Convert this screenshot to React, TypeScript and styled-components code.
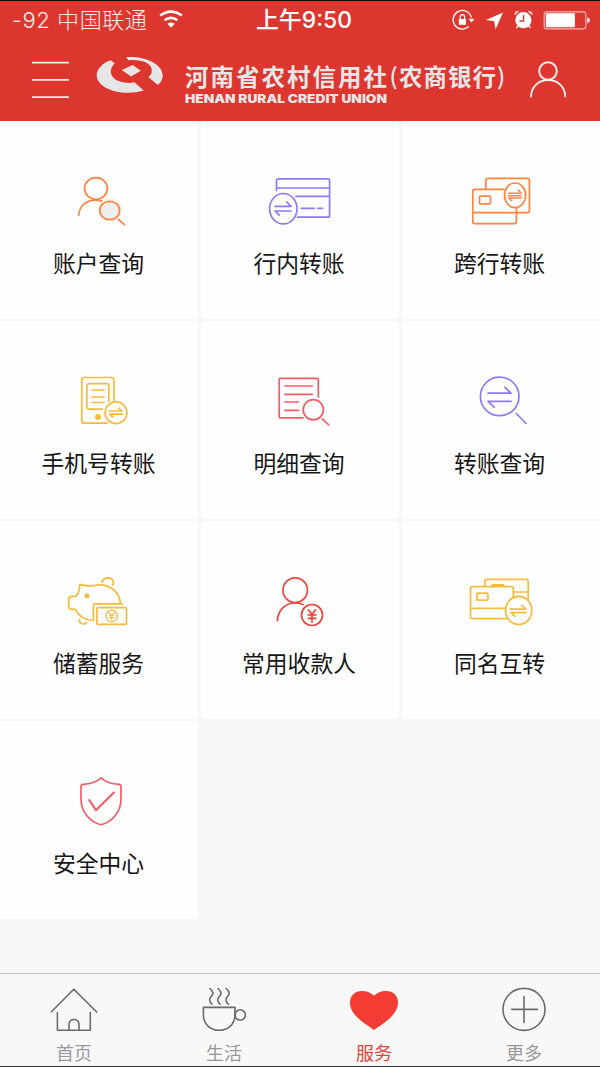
import React from "react";
import styled, { createGlobalStyle } from "styled-components";

const GlobalStyle = createGlobalStyle`
  * { box-sizing: border-box; }
  body {
    margin: 0;
    background: #f7f7f7;
    font-family: Inter, "Noto Sans CJK SC", sans-serif;
  }
`;

const Screen = styled.div`
  width: 600px;
  height: 1067px;
  display: flex;
  flex-direction: column;
  overflow: hidden;
  background: #f7f7f7;
  border-top: 1px solid #1c0504;
  border-bottom: 1px solid #333;
`;

const Header = styled.header`
  height: 120px;
  flex: none;
  background: #dc362f;
  color: #fff;
`;

const StatusBar = styled.div`
  height: 38px;
  display: flex;
  align-items: center;
`;

const Carrier = styled.div`
  width: 240px;
  padding-left: 12px;
  display: flex;
  align-items: center;
  font-size: 22px;
  line-height: 38px;
  font-weight: 300;
  color: #fdeeee;
  white-space: nowrap;
`;

const CarrierName = styled.span`
  width: 147px;
  letter-spacing: 0.55px;
`;

const Clock = styled.div`
  width: 128px;
  text-align: center;
  font-size: 22.9px;
  line-height: 38px;
  font-weight: 500;
  white-space: nowrap;
`;

const StatusIcons = styled.div`
  flex: 1;
  display: flex;
  justify-content: flex-end;
  align-items: center;
  padding-right: 9px;
  gap: 9px;
`;

const NavBar = styled.div`
  height: 82px;
  display: flex;
  align-items: flex-start;
  padding: 21px 0 0 30px;
`;

const NavButton = styled.button<{ $push?: number }>`
  border: 0;
  padding: 0;
  background: none;
  display: flex;
  margin-left: ${(p) => p.$push ?? 0}px;
`;

const Brand = styled.div`
  display: flex;
  margin: -5px 0 0 24px;
`;

const Grid = styled.main`
  display: grid;
  grid-template-columns: repeat(3, 198px);
  grid-auto-rows: 198px;
  column-gap: 3px;
  row-gap: 2px;
  height: 852px;
  flex: none;
  align-content: start;
`;

const Tile = styled.div`
  background: #fefefe;
  padding-top: 49px;
  display: flex;
  flex-direction: column;
  align-items: center;
`;

const TileLabel = styled.span<{ $shift: number }>`
  font-size: 22.8px;
  line-height: 34px;
  height: 34px;
  margin-top: 17px;
  padding-right: ${(p) => p.$shift}px;
  color: #161616;
  white-space: nowrap;
`;

const TabBar = styled.nav`
  flex: 1;
  display: flex;
  border-top: 1px solid #c4c4c4;
  background: #f8f8f8;
`;

const Tab = styled.div<{ $active?: boolean }>`
  width: 150px;
  padding: 11px 2px 0 0;
  display: flex;
  flex-direction: column;
  align-items: center;
  font-size: 18px;
  line-height: 24px;
  color: ${(p) => (p.$active ? "#e2443d" : "#999")};
`;

const TabLabel = styled.span`
  margin-top: 7px;
`;

const Svg = styled.svg`
  display: block;
  flex: none;
  overflow: visible;
  fill: none;
  stroke-linecap: round;
  stroke-linejoin: round;
`;

type GlyphProps = {
  box: [number, number, number, number];
  color?: string;
  weight?: number;
  children: React.ReactNode;
};

const Glyph = ({ box, color = "#fff", weight = 1.7, children }: GlyphProps) => (
  <Svg width={box[2]} height={box[3]} viewBox={box.join(" ")} stroke={color} strokeWidth={weight}>
    {children}
  </Svg>
);

const ORANGE = "#ff8440";
const VIOLET = "#9178f5";
const YELLOW = "#f7bb3a";
const PINK = "#f45d68";
const RED = "#f2423b";

const services = [
  {
    label: "账户查询", color: ORANGE, x: 59, y: 170, art: (
      <>
        <ellipse cx="96" cy="188.5" rx="11.4" ry="10.8" />
        <path d="M78.6 215.5C79 206.5 86 200.3 95 200.1Q99 200 102.3 201.4" />
        <circle cx="111" cy="209.5" r="12" fill="#f6f6f6" stroke="none" />
        <ellipse cx="109.7" cy="210.5" rx="9.9" ry="9.2" fill="#efefef" />
        <path d="M118.3 219.3L124.6 224.7" />
      </>
    ),
  },
  {
    label: "行内转账", color: VIOLET, x: 260, y: 170, art: (
      <>
        <path d="M276.5 190.5V180.6Q276.5 178.8 278.3 178.8H327.8Q329.6 178.8 329.6 180.6V215.4Q329.6 217.2 327.8 217.2H297.5M276.5 188H329.5M296 196.4H329.5M301.3 208.3H314M317.5 208.3H322.5" />
        <ellipse cx="283.3" cy="208.7" rx="13.7" ry="15.2" />
        <path d="M275 206.3H291L286.8 202M291 211H275L279.2 215.2" />
      </>
    ),
  },
  {
    label: "跨行转账", color: ORANGE, x: 461, y: 170, art: (
      <>
        <path d="M485.8 188.5V180.5Q485.8 178.3 488 178.3H527.3Q529.5 178.3 529.5 180.5V210.5Q529.5 212.7 527.3 212.7H473M504 189.3H475.2Q472.8 189.3 472.8 191.7V221.3Q472.8 223.7 475.2 223.7H514Q516.4 223.7 516.4 221.3V208" />
        <rect x="479.5" y="196.2" width="11" height="7.6" rx="1" />
        <ellipse cx="515.1" cy="195.3" rx="10.6" ry="12.3" />
        <path d="M508.5 193.3H521.3L518.3 190M508.5 195.7H521.3M521.3 198H508.8L511.8 200.8" strokeWidth="1.4" />
      </>
    ),
  },
  {
    label: "手机号转账", color: YELLOW, x: 59, y: 370, art: (
      <>
        <path d="M114 400.5V380Q114 377.5 111.5 377.5H84.3Q81.8 377.5 81.8 380V420.7Q81.8 423.2 84.3 423.2H107" />
        <path d="M108.8 401.5V385.7Q108.8 383.6 106.7 383.6H89Q86.9 383.6 86.9 385.7V407Q86.9 409.2 89 409.2H102.3M92 390H104M92 397H104M92 402.5H104" />
        <circle cx="98" cy="417" r="2.9" fill={YELLOW} stroke="none" />
        <circle cx="116" cy="412.7" r="10.9" />
        <path d="M109 411H122L118.6 408.2M122.5 414.2H109.6L113 417" />
      </>
    ),
  },
  {
    label: "明细查询", color: PINK, x: 260, y: 370, art: (
      <>
        <path d="M318.3 397V379.5Q318.3 378.4 317.2 378.4H280.3Q279.2 378.4 279.2 379.5V416.7Q279.2 417.8 280.3 417.8H303M285 386H312.3M285 394.3H312.3M285 402H298.5M285 410.3H298.5" />
        <circle cx="313.3" cy="409.8" r="10.1" />
        <path d="M322.3 418.9L328.7 424.8" />
      </>
    ),
  },
  {
    label: "转账查询", color: VIOLET, x: 461, y: 370, art: (
      <>
        <circle cx="499.7" cy="396.4" r="19.3" />
        <path d="M516.3 413.5L526.2 423.5M488 393.2H511L505 387.4M511 401.3H488L494.2 407.2" />
      </>
    ),
  },
  {
    label: "储蓄服务", color: YELLOW, x: 59, y: 570, art: (
      <>
        <path d="M120.4 603C119.5 592 110 584.8 99.5 584.8Q97 584.8 94.5 585.4Q87 586.8 80 584.4L79 590.5Q78.3 594.5 75.3 596.4H71Q68.7 597 68.7 599V606.5Q68.7 609 71 609.3H75.4C78.5 616 85 620 93.4 620.5V605.5Q93.4 603.8 95 603.8H120.5L122.3 604.4" />
        <circle cx="87" cy="595.7" r="2.5" fill={YELLOW} stroke="none" />
        <path d="M101.8 582.2C103.5 577 111 576.6 113 580.5Q113.8 583 112.8 585.2M79.4 619.5C79 624 84 625.3 86.6 622.4" />
        <rect x="96.9" y="607.6" width="29.6" height="16.8" rx="1.2" />
        <circle cx="111.7" cy="616" r="5.8" strokeWidth="1.2" />
        <path d="M109.2 612.8L111.7 615.5L114.2 612.8M111.7 615.5V619.8M109.3 615.8H114.1M109.3 617.8H114.1" strokeWidth="1.1" />
      </>
    ),
  },
  {
    label: "常用收款人", color: RED, x: 260, y: 570, art: (
      <>
        <ellipse cx="295.2" cy="590.2" rx="12.2" ry="12.4" />
        <path d="M277.4 620.5C278 610 285.5 603.3 294.5 603Q299 602.9 303 604.5" />
        <circle cx="312" cy="615" r="10.5" />
        <path d="M308.5 610L312 614.3L315.5 610M312 614.3V622M308.5 614.9H315.7M308.5 618.3H315.7" />
      </>
    ),
  },
  {
    label: "同名互转", color: YELLOW, x: 461, y: 570, art: (
      <>
        <path d="M484.8 586V581.5Q484.8 579.3 487 579.3H526Q528.2 579.3 528.2 581.5V599M514 592H528M513.4 597V588.9Q513.4 586.7 511.2 586.7H472.7Q470.5 586.7 470.5 588.9V616.4Q470.5 618.6 472.7 618.6H507M470.5 608.4H505.5" />
        <path d="M492.7 585.6H503.3" strokeWidth="3" />
        <rect x="476.9" y="593.2" width="11" height="7" rx=".8" />
        <ellipse cx="518.7" cy="610.4" rx="13.1" ry="14.1" />
        <path d="M510.3 609.1H525.8L521.8 605.3M525.8 612.7H511L514.8 616.4" />
      </>
    ),
  },
  {
    label: "安全中心", color: PINK, x: 59, y: 770, art: (
      <>
        <path d="M101 777.8C96.5 782 89.5 784 83 784.4Q81 784.6 81 786.5V799C81 812 90 822 101 824.8C112 822 121 812 121 799V786.5Q121 784.6 119 784.4C112.5 784 105.5 782 101 777.8Z" />
        <path d="M89.2 800.2L96 810.2L113.9 792.6" strokeWidth="2.1" />
      </>
    ),
  },
];

const labelShift = [1, 2, 3];

const tabs = [
  {
    label: "首页", x: 44, art: (
      <path d="M51.4 1011.8L73.8 989.2L96.7 1012M57.4 1012.5V1030.2H90.3V1012.5M69 1030V1024.3C69 1017.8 79 1017.8 79 1024.3V1030" />
    ),
  },
  {
    label: "生活", x: 194, art: (
      <>
        <path d="M203.4 1007.4H235V1014.5C235 1035.5 203.4 1035.5 203.4 1014.5Z" />
        <circle cx="240.2" cy="1015" r="5.2" />
        {[0, 8.1, 16.3].map((dx) => (
          <path key={dx} d={`M${209.8 + dx} 988.5C${214.5 + dx} 992.5 ${213.2 + dx} 994.5 ${210.8 + dx} 997C${208.5 + dx} 999.5 ${209.3 + dx} 1001.5 ${212 + dx} 1004.2`} />
        ))}
      </>
    ),
  },
  {
    label: "服务", x: 344, active: true, art: (
      <path d="M374 1030C367 1024.5 350 1016 350 1002.8C350 995.5 355 991 361.8 991C367 991 371 992.5 374 995.8C377 992.5 381 991 386.2 991C393 991 398 995.5 398 1002.8C398 1016 381 1024.5 374 1030Z" fill="#f23c34" stroke="none" />
    ),
  },
  {
    label: "更多", x: 494, art: (
      <>
        <circle cx="524" cy="1009.4" r="21" />
        <path d="M511.8 1009.4H537.3M524 996.5V1022.5" />
      </>
    ),
  },
];

const App = () => (
  <>
    <GlobalStyle />
    <Screen>
      <Header>
        <StatusBar>
          <Carrier>
            <CarrierName>-92 中国联通</CarrierName>
            <Glyph box={[159, 10, 24, 20]} weight={2.5}>
              <path d="M160.2 15.6Q171 7.6 181.9 15.6M164.6 20.3Q171 15.5 177.5 20.3" strokeLinecap="butt" />
              <path d="M167.4 23.8Q171 21.3 174.7 23.8L171 27.8Z" fill="#fff" stroke="none" />
            </Glyph>
          </Carrier>
          <Clock>上午9:50</Clock>
          <StatusIcons>
            <Glyph box={[452, 9, 23, 22]} weight={1.3}>
              <path d="M471.3 17A9.3 9.3 0 1 0 468.5 26.8" />
              <path d="M468.5 18.8H474.5L471.5 22.5Z" fill="#fff" stroke="none" />
              <rect x="458.8" y="19" width="7.2" height="5.8" rx=".5" fill="#fff" stroke="none" />
              <path d="M460.2 19V17C460.2 13.8 464.6 13.8 464.6 17V19" />
            </Glyph>
            <Glyph box={[484, 10, 20, 20]}>
              <path d="M486 19.9L503 12.4L495.6 29.2L494.2 21.3Z" fill="#fff" stroke="none" />
            </Glyph>
            <Glyph box={[513, 10, 21, 20]} weight={1.4}>
              <circle cx="523.4" cy="20.2" r="8.1" fill="#fff" stroke="none" />
              <path d="M523.6 15.6V21H519.9" stroke="#dc362f" />
              <path d="M515.2 14.2Q515.4 12 518 11.6M531.7 14.2Q531.4 12 528.9 11.6M518 26L516.7 27.6M528.9 26L530.2 27.6" />
            </Glyph>
            <Glyph box={[543, 10, 48, 20]}>
              <rect x="544.2" y="11.8" width="41.6" height="17" rx="2.6" stroke="#f3b5b2" strokeWidth="1.2" />
              <rect x="545.8" y="13.3" width="29.2" height="14" rx="1" fill="#fff" stroke="none" />
              <path d="M587.3 17.2Q589.8 18 589.8 20.3Q589.8 22.6 587.3 23.4Z" fill="#fff" stroke="none" />
            </Glyph>
          </StatusIcons>
        </StatusBar>
        <NavBar>
          <NavButton aria-label="menu">
            <Glyph box={[30, 60, 41, 40]} color="#fbe9e8" weight={1.9}>
              <path d="M32 62.6H69M32 79.9H69M32 97.1H69" strokeLinecap="butt" />
            </Glyph>
          </NavButton>
          <Brand>
            <Svg width="412" height="50" viewBox="95 55 412 50">
              <g fill="#e6e6e6">
                <path d="M110.4 60.2C102 63.5 96.7 69 96.7 75.2C96.7 85 110.5 92.7 128 92.7Q136.5 92.7 143.8 90.4L134.5 82.2Q131 83.1 126.5 82.8C117 82.2 110.8 77.5 110.8 71.8Q110.8 67 114.8 63.3Z" />
                <path d="M126.2 57C147 56 162.7 64.5 162.7 75.5Q162.7 81 157.8 85L148.3 77Q151.8 74.5 151.8 70.5C151.8 63.5 142.5 59.3 128.4 60.2Z" />
                <path d="M132.7 65L140.8 70.8L131 76.4L121.8 69.9Z" />
                <g fontFamily='"Noto Sans CJK SC", sans-serif' fontWeight="700" fontSize="23.5">
                  <text x="185" y="85.5" textLength="202" lengthAdjust="spacing">河南省农村信用社</text>
                  <text x="389.5" y="84.5" fontWeight="500" fontSize="23">(</text>
                  <text x="399" y="85.5" textLength="97" lengthAdjust="spacing">农商银行</text>
                  <text x="497" y="84.5" fontWeight="500" fontSize="23">)</text>
                </g>
                <text x="185" y="102.6" fontFamily="Inter, sans-serif" fontWeight="900" fontSize="11.7" textLength="202" lengthAdjust="spacingAndGlyphs">HENAN RURAL CREDIT UNION</text>
              </g>
            </Svg>
          </Brand>
          <NavButton $push={21} aria-label="account">
            <Glyph box={[528, 60, 40, 40]} color="#fdf0ef" weight={1.9}>
              <circle cx="548" cy="71" r="8.8" />
              <path d="M531 97.3C531 74.3 565.3 74.3 565.3 97.3" strokeLinecap="butt" />
            </Glyph>
          </NavButton>
        </NavBar>
      </Header>
      <Grid>
        {services.map((s, i) => (
          <Tile key={s.label}>
            <Glyph box={[s.x, s.y, 80, 60]} color={s.color}>{s.art}</Glyph>
            <TileLabel $shift={labelShift[i % 3]}>{s.label}</TileLabel>
          </Tile>
        ))}
      </Grid>
      <TabBar>
        {tabs.map((t) => (
          <Tab key={t.label} $active={t.active}>
            <Glyph box={[t.x, 985, 60, 50]} color="#6b6b6b" weight={1.6}>{t.art}</Glyph>
            <TabLabel>{t.label}</TabLabel>
          </Tab>
        ))}
      </TabBar>
    </Screen>
  </>
);

export default App;
